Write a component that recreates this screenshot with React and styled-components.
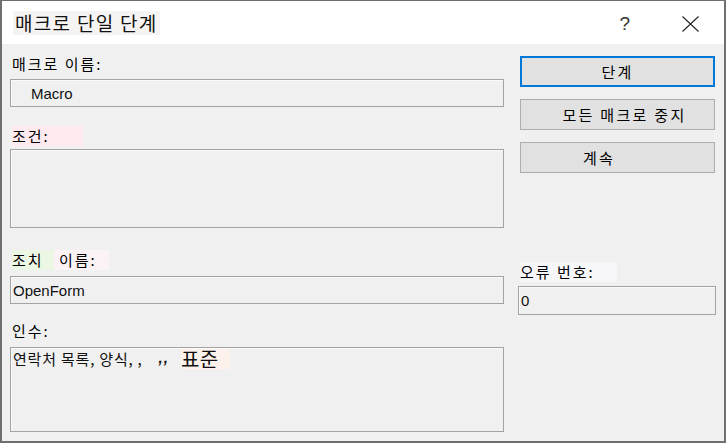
import styled, { createGlobalStyle } from 'styled-components';

const GlobalStyle = createGlobalStyle`
  html, body {
    margin: 0;
    padding: 0;
    background: #f0f0f0;
  }
  body {
    font-family: "Noto Sans CJK KR", "Liberation Sans", sans-serif;
  }
`;

const KR = `"Noto Sans CJK KR", "Liberation Sans", sans-serif`;
const LATIN = `"Liberation Sans", "Noto Sans CJK KR", sans-serif`;

const Window = styled.div`
  width: 726px;
  height: 443px;
  box-sizing: border-box;
  border: 2px solid #6f6f6f;
  border-top-width: 1px;
  background: #f0f0f0;
  display: flex;
  flex-direction: column;
  overflow: hidden;
`;

const TitleBar = styled.div`
  height: 43px;
  background: #fff;
  display: flex;
  align-items: center;
  padding: 0 0 0 11px;
  flex-shrink: 0;
`;

const Title = styled.div`
  font-family: ${KR};
  font-size: 19px;
  letter-spacing: 1.3px;
  color: #111;
  background: #f6f3f3;
  padding: 1px 2px 2px 2px;
  line-height: 21px;
  margin-top: 1px;
  white-space: nowrap;
`;

const TitleButtons = styled.div`
  margin-left: auto;
  display: flex;
  align-items: center;
  gap: 52px;
  padding-right: 25px;
`;

const HelpMark = styled.span`
  font-family: ${LATIN};
  font-size: 19px;
  color: #333;
  line-height: 20px;
  margin-top: 2px;
`;

const Body = styled.div`
  display: grid;
  grid-template-columns: 494px 198px;
  column-gap: 14px;
  padding: 0 8px;
`;

const Column = styled.div`
  display: flex;
  flex-direction: column;
`;

const Label = styled.div`
  font-family: ${KR};
  font-size: 15px;
  letter-spacing: 2px;
  line-height: 20px;
  height: 20px;
  color: #000;
  padding-left: 2px;
  margin-top: ${p => p.$top}px;
  white-space: pre;
  display: flex;
`;

const Mark = styled.span`
  background: ${p => p.$bg};
  padding-right: ${p => p.$pad || 0}px;
`;

const Field = styled.div`
  box-sizing: border-box;
  height: ${p => p.$h}px;
  margin-top: ${p => p.$top}px;
  border: 1px solid #a3a3a3;
  box-shadow: inset 1px 1px 0 #fafafa;
  background: #f0f0f0;
  display: flex;
  align-items: ${p => (p.$multi ? 'flex-start' : 'center')};
  padding: ${p => (p.$multi ? '1px 0 0 2px' : '0 0 0 2px')};
  font-family: ${LATIN};
  font-size: 15px;
  color: #111;
  white-space: pre;
`;

const Indent = styled.span`
  padding-left: ${p => p.$w}px;
`;

const ArgText = styled.span`
  font-family: ${KR};
  font-size: 15px;
  letter-spacing: 0.8px;
  line-height: 20px;
  color: #111;
`;

const BigPart = styled.span`
  font-family: ${KR};
  font-size: 20px;
  letter-spacing: 0.5px;
  line-height: 20px;
  background: #fdf1ec;
  padding-right: 11px;
`;

const Commas = styled.span`
  font-family: ${LATIN};
  font-weight: bold;
  font-style: italic;
  font-size: 15px;
  letter-spacing: 1px;
  padding: 0 12px 0 16px;
`;

const Button = styled.button`
  box-sizing: border-box;
  height: 31px;
  width: 195px;
  margin: ${p => p.$top}px 0 0 2px;
  background: #e1e1e1;
  border: ${p => (p.$focused ? '2px solid #0078d7' : '1px solid #adadad')};
  font-family: ${KR};
  font-size: 15px;
  letter-spacing: 2.3px;
  color: #000;
  display: flex;
  align-items: center;
  justify-content: center;
  padding: 0;
`;

const ButtonText = styled.span`
  padding-left: ${p => p.$pl || 0}px;
  padding-right: ${p => p.$pr || 0}px;
`;

const CloseIcon = () => (
  <svg width="17" height="16" viewBox="0 0 17 16" style={{ marginTop: 2 }}>
    <path d="M0.5 0.5 L16.5 15.5 M16.5 0.5 L0.5 15.5" stroke="#222" strokeWidth="1.1" fill="none" />
  </svg>
);

export default function App() {
  return (
    <>
      <GlobalStyle />
      <Window>
        <TitleBar>
          <Title>매크로 단일 단계</Title>
          <TitleButtons>
            <HelpMark>?</HelpMark>
            <CloseIcon />
          </TitleButtons>
        </TitleBar>
        <Body>
          <Column>
            <Label $top={10}>매크로 이름:</Label>
            <Field $h={28} $top={5}>
              <Indent $w={18}>Macro</Indent>
            </Field>
            <Label $top={19}>
              <Mark $bg="#fde9ee" $pad={33}>조건:</Mark>
            </Label>
            <Field $h={79} $top={3} $multi />
            <Label $top={22}>
              <Mark $bg="#ebf6e3" $pad={10}>조치</Mark>
              <Mark $bg="#fbf2f6" $pad={12}> 이름:</Mark>
            </Label>
            <Field $h={28} $top={6}>OpenForm</Field>
            <Label $top={17}>인수:</Label>
            <Field $h={85} $top={6} $multi>
              <ArgText>연락처 목록, 양식, ,</ArgText>
              <Commas>,,</Commas>
              <BigPart>표준</BigPart>
            </Field>
          </Column>
          <Column>
            <Button $top={12} $focused>
              <ButtonText>단계</ButtonText>
            </Button>
            <Button $top={12}>
              <ButtonText $pl={14}>모든 매크로 중지</ButtonText>
            </Button>
            <Button $top={12}>
              <ButtonText $pr={37}>계속</ButtonText>
            </Button>
            <Label $top={89}>
              <Mark $bg="#f7f7fa" $pad={22}>오류 번호:</Mark>
            </Label>
            <Field $h={29} $top={4}>0</Field>
          </Column>
        </Body>
      </Window>
    </>
  );
}
